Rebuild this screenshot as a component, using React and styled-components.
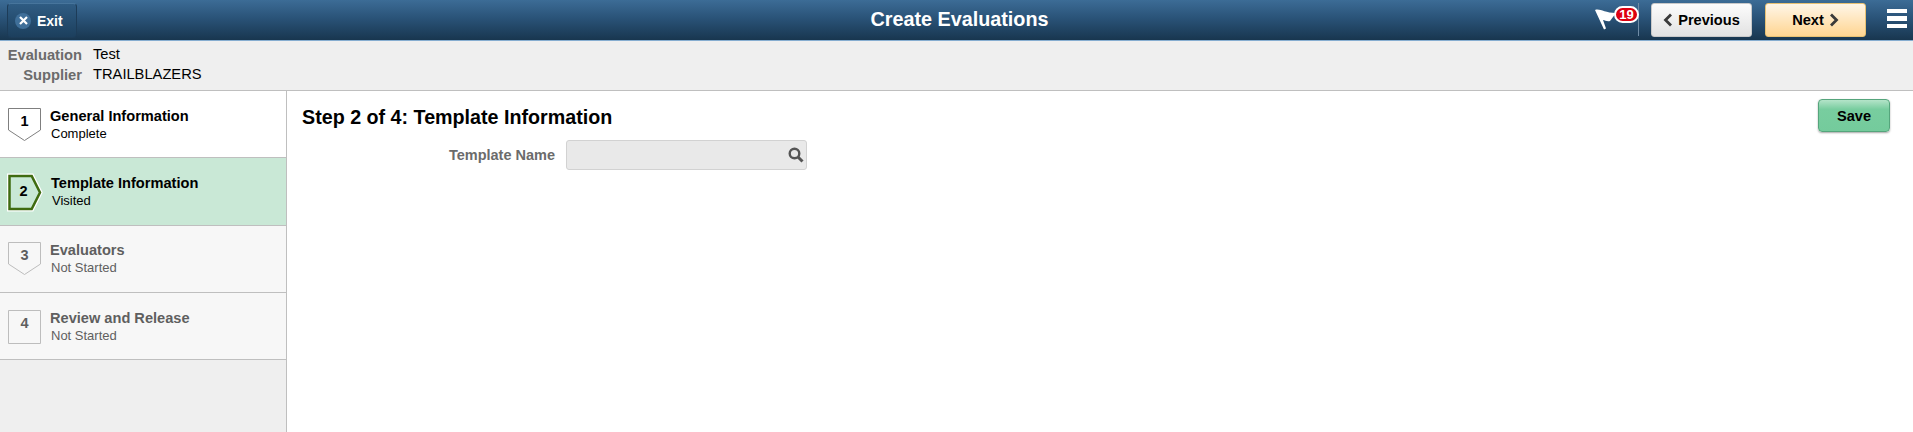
import styled, { createGlobalStyle } from 'styled-components';

const GlobalStyle = createGlobalStyle`
  html, body {
    margin: 0;
    padding: 0;
    height: 100%;
    overflow: hidden;
    background: #fff;
    font-family: "Liberation Sans", Arial, sans-serif;
  }
`;

const Page = styled.div`
  display: flex;
  flex-direction: column;
  height: 432px;
`;

const Banner = styled.header`
  height: 40px;
  flex: none;
  display: flex;
  align-items: center;
  padding: 0 6px 0 7px;
  position: relative;
  background: linear-gradient(to bottom, #3c6c96 0%, #2a5378 45%, #18364f 100%);
  border-bottom: 1px solid #86add0;
`;

const ExitButton = styled.button`
  width: 70px;
  height: 35px;
  margin-top: 1px;
  padding: 0 0 0 7px;
  display: flex;
  align-items: center;
  gap: 6px;
  background: linear-gradient(to bottom, #2f5c83, #1c3f5d);
  border: 1px solid #1d3c58;
  border-top-color: #47759c;
  border-radius: 4px;
  color: #fff;
  font: bold 14px "Liberation Sans", Arial, sans-serif;
`;

const ExitIcon = styled.span`
  width: 16px;
  height: 16px;
  border-radius: 50%;
  background: #3f6f99;
  display: flex;
  align-items: center;
  justify-content: center;
`;

const Title = styled.h1`
  position: absolute;
  left: 6px;
  right: 0;
  top: 9px;
  margin: 0;
  text-align: center;
  color: #fff;
  font-size: 19.8px;
  line-height: 21px;
  font-weight: bold;
  pointer-events: none;
`;

const BannerActions = styled.div`
  margin-left: auto;
  display: flex;
  align-items: center;
`;

const FlagWrap = styled.div`
  width: 43px;
  height: 33px;
  margin-right: 12px;
  position: relative;
  border-right: 1px solid #6f8ca6;
  margin-top: -1px;
`;

const Badge = styled.span`
  position: absolute;
  top: 3px;
  right: -1px;
  width: 25px;
  height: 17px;
  box-sizing: border-box;
  border: 2px solid #fff;
  border-radius: 9px;
  background: #dd0010;
  color: #fff;
  font-size: 13px;
  line-height: 13px;
  font-weight: bold;
  text-align: center;
`;

const NavButton = styled.button`
  width: 101px;
  height: 34px;
  margin-right: ${(p) => p.$gap}px;
  padding: 0;
  display: flex;
  align-items: center;
  justify-content: center;
  gap: 5px;
  border-radius: 3px;
  border: 1px solid ${(p) => (p.$primary ? '#e8c173' : '#c9c9c9')};
  background: ${(p) =>
    p.$primary
      ? 'linear-gradient(to bottom, #fff6e8, #ffd591)'
      : 'linear-gradient(to bottom, #fcfcfc, #e2e2e2)'};
  color: #000;
  font: bold 14.6px "Liberation Sans", Arial, sans-serif;
`;

const MenuIcon = styled.div`
  width: 20px;
  display: flex;
  flex-direction: column;
  gap: 3px;
  margin-top: -3px;

  span {
    height: 4.5px;
    background: #fff;
  }
`;

const SubHeader = styled.div`
  height: 50px;
  flex: none;
  box-sizing: border-box;
  padding-top: 3px;
  background: #efefef;
  border-bottom: 1px solid #bfbfbf;
`;

const InfoRow = styled.div`
  display: flex;
  height: 20px;
  align-items: center;
  font-size: 14.7px;
`;

const InfoLabel = styled.span`
  width: 82px;
  margin-top: 2px;
  text-align: right;
  color: #6b6b6b;
  font-weight: bold;
`;

const InfoValue = styled.span`
  margin-left: 11px;
  margin-bottom: 1px;
  color: #000;
`;

const Body = styled.div`
  flex: 1;
  display: flex;
  min-height: 0;
`;

const Sidebar = styled.nav`
  width: 287px;
  flex: none;
  box-sizing: border-box;
  background: #efefef;
  border-right: 1px solid #bfbfbf;
`;

const bgByState = { done: '#fff', active: '#c9e8d6', todo: '#f7f7f7' };

const Step = styled.div`
  height: ${(p) => (p.$state === 'active' ? 67 : 66)}px;
  display: flex;
  align-items: flex-start;
  background: ${(p) => bgByState[p.$state]};
  border-bottom: 1px solid #bfbfbf;
`;

const StepMark = styled.svg`
  width: 38px;
  height: 42px;
  flex: none;
  margin: ${(p) => p.$top}px 0 0 7px;
`;

const StepText = styled.div`
  margin-left: ${(p) => (p.$active ? 6 : 5)}px;
  padding-top: ${(p) => p.$top}px;
  color: ${(p) => (p.$muted ? '#5f5f5f' : '#000')};
`;

const StepTitle = styled.div`
  font-size: 14.6px;
  line-height: 18px;
  font-weight: bold;
`;

const StepStatus = styled.div`
  font-size: 13px;
  line-height: 18px;
  margin-left: 1px;
`;

const Content = styled.main`
  flex: 1;
  padding: 10px 23px 0 15px;
`;

const ContentHead = styled.div`
  display: flex;
  justify-content: space-between;
  align-items: flex-start;
`;

const StepHeading = styled.h2`
  margin: 6px 0 0;
  font-size: 19.7px;
  line-height: 21px;
  font-weight: bold;
  color: #000;
`;

const SaveButton = styled.button`
  width: 72px;
  height: 33px;
  margin-top: -2px;
  padding: 0;
  border: 1px solid #55a57c;
  border-radius: 4px;
  background: linear-gradient(to bottom, #b4e4c9, #78cd9f 30%, #74cb9c);
  box-shadow: 0 1px 2px rgba(0, 0, 0, 0.35);
  color: #000;
  font: bold 14.6px "Liberation Sans", Arial, sans-serif;
`;

const Field = styled.div`
  display: flex;
  align-items: center;
  margin-top: 8px;
`;

const FieldLabel = styled.label`
  width: 253px;
  text-align: right;
  color: #6b6b6b;
  font-size: 14.5px;
  font-weight: bold;
`;

const LookupBox = styled.div`
  width: 241px;
  height: 30px;
  margin-left: 11px;
  box-sizing: border-box;
  display: flex;
  align-items: center;
  justify-content: flex-end;
  padding-right: 1px;
  background: #e9e9e9;
  border: 1px solid #d2d2d2;
  border-radius: 3px;
`;

function Flag() {
  return (
    <svg
      width="22"
      height="23"
      viewBox="0 0 22 23"
      style={{ position: 'absolute', left: 0, top: 5 }}
    >
      <path d="M0 2 C5 0 9 5 21 5 L15 13 C12 14 10 12 8 12 L11 20.5 L9 21.5 Z" fill="#fff" />
    </svg>
  );
}

function Chevron({ dir }) {
  return (
    <svg width="10" height="14" viewBox="0 0 10 14">
      <path
        d={dir === 'left' ? 'M8 1.5 L2.5 7 L8 12.5' : 'M2 1.5 L7.5 7 L2 12.5'}
        fill="none"
        stroke="#3a3a3a"
        strokeWidth="2.8"
      />
    </svg>
  );
}

const markShapes = {
  down: { points: '1.5,1.5 33.5,1.5 33.5,23 17.5,33.5 1.5,23', textX: 17.5, baseline: 19 },
  box: { points: '1.5,1.5 33.5,1.5 33.5,34.5 1.5,34.5', textX: 17.5, baseline: 19 },
  right: { points: '2.5,4 24.7,4 33,20.5 24.7,37 2.5,37', textX: 16.5, baseline: 24 },
};

function Mark({ n, kind, color, textColor, top }) {
  const shape = markShapes[kind];
  const active = kind === 'right';
  return (
    <StepMark viewBox="0 0 38 42" $top={top}>
      {active && <polygon points={shape.points} fill="#fff" stroke="#fff" strokeWidth="5" />}
      <polygon
        points={shape.points}
        fill={active ? '#c9e8d6' : 'none'}
        stroke={color}
        strokeWidth={active ? 2.5 : 1}
      />
      <text
        x={shape.textX}
        y={shape.baseline}
        textAnchor="middle"
        fontFamily="Liberation Sans, Arial, sans-serif"
        fontSize="14.5"
        fontWeight="bold"
        fill={textColor}
      >
        {n}
      </text>
    </StepMark>
  );
}

const steps = [
  { n: 1, title: 'General Information', status: 'Complete', state: 'done', kind: 'down', color: '#7f7f7f', text: '#000', markTop: 16, textTop: 16 },
  { n: 2, title: 'Template Information', status: 'Visited', state: 'active', kind: 'right', color: '#3f6b10', text: '#000', markTop: 14, textTop: 16 },
  { n: 3, title: 'Evaluators', status: 'Not Started', state: 'todo', kind: 'down', color: '#bdbdbd', text: '#5f5f5f', markTop: 15, textTop: 15 },
  { n: 4, title: 'Review and Release', status: 'Not Started', state: 'todo', kind: 'box', color: '#bdbdbd', text: '#5f5f5f', markTop: 16, textTop: 16 },
];

export default function App() {
  return (
    <Page>
      <GlobalStyle />
      <Banner>
        <ExitButton>
          <ExitIcon>
            <svg width="9" height="9" viewBox="0 0 9 9">
              <path d="M1 1 L8 8 M8 1 L1 8" stroke="#fff" strokeWidth="2.2" />
            </svg>
          </ExitIcon>
          Exit
        </ExitButton>
        <Title>Create Evaluations</Title>
        <BannerActions>
          <FlagWrap>
            <Flag />
            <Badge>19</Badge>
          </FlagWrap>
          <NavButton $gap={13}>
            <Chevron dir="left" />
            Previous
          </NavButton>
          <NavButton $primary $gap={21}>
            Next
            <Chevron dir="right" />
          </NavButton>
          <MenuIcon>
            <span />
            <span />
            <span />
          </MenuIcon>
        </BannerActions>
      </Banner>
      <SubHeader>
        <InfoRow>
          <InfoLabel>Evaluation</InfoLabel>
          <InfoValue>Test</InfoValue>
        </InfoRow>
        <InfoRow>
          <InfoLabel>Supplier</InfoLabel>
          <InfoValue>TRAILBLAZERS</InfoValue>
        </InfoRow>
      </SubHeader>
      <Body>
        <Sidebar>
          {steps.map((step) => (
            <Step key={step.n} $state={step.state}>
              <Mark
                n={step.n}
                kind={step.kind}
                color={step.color}
                textColor={step.text}
                top={step.markTop}
              />
              <StepText
                $active={step.state === 'active'}
                $muted={step.state === 'todo'}
                $top={step.textTop}
              >
                <StepTitle>{step.title}</StepTitle>
                <StepStatus>{step.status}</StepStatus>
              </StepText>
            </Step>
          ))}
        </Sidebar>
        <Content>
          <ContentHead>
            <StepHeading>Step 2 of 4: Template Information</StepHeading>
            <SaveButton>Save</SaveButton>
          </ContentHead>
          <Field>
            <FieldLabel>Template Name</FieldLabel>
            <LookupBox>
              <svg width="18" height="18" viewBox="0 0 18 18">
                <circle cx="7.5" cy="7.5" r="4.8" fill="none" stroke="#555" strokeWidth="2.4" />
                <path d="M11 11 L15.5 15.5" stroke="#555" strokeWidth="3" />
              </svg>
            </LookupBox>
          </Field>
        </Content>
      </Body>
    </Page>
  );
}
